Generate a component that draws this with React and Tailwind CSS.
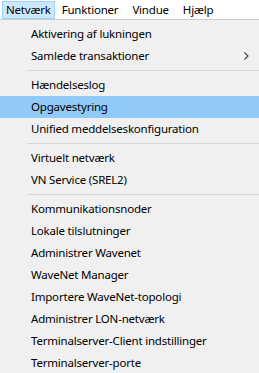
import React from 'react';

const groups = [
  [
    { label: 'Aktivering af lukningen' },
    { label: 'Samlede transaktioner', sub: true },
  ],
  [
    { label: 'Hændelseslog' },
    { label: 'Opgavestyring', active: true },
    { label: 'Unified meddelseskonfiguration' },
  ],
  [
    { label: 'Virtuelt netværk' },
    { label: 'VN Service (SREL2)' },
  ],
  [
    { label: 'Kommunikationsnoder' },
    { label: 'Lokale tilslutninger' },
    { label: 'Administrer Wavenet' },
    { label: 'WaveNet Manager' },
    { label: 'Importere WaveNet-topologi' },
    { label: 'Administrer LON-netværk' },
    { label: 'Terminalserver-Client indstillinger' },
    { label: 'Terminalserver-porte' },
  ],
];

const MenuItem = ({ item }) => (
  <div
    className={`h-[22px] flex items-center pl-[31px] pr-[9px] ${
      item.active ? 'bg-[#91c9f7]' : ''
    }`}
  >
    <span className="flex-1 whitespace-nowrap">{item.label}</span>
    {item.sub && (
      <svg width="5" height="8" viewBox="0 0 5 8" className="mr-[1px]">
        <path d="M0.5 0.5 L4 4 L0.5 7.5" fill="none" stroke="#404040" strokeWidth="1.1" />
      </svg>
    )}
  </div>
);

export default function App() {
  return (
    <div
      className="w-[259px] h-[373px] overflow-hidden bg-[#f0f0f0] text-[11.5px] tracking-[-0.2px] text-black"
      style={{ fontFamily: '"Segoe UI", "Noto Sans", sans-serif' }}
    >
      {/* Menu bar */}
      <div className="h-[20px] bg-white border-b border-[#cccccc] flex items-start pt-[1px]">
        <div className="ml-[2px] h-[18px] px-[3px] flex items-center bg-[#cce8ff] border border-[#99d1ff]">
          Netværk
        </div>
        <div className="h-[18px] px-[7px] flex items-center">Funktioner</div>
        <div className="h-[18px] px-[7px] flex items-center">Vindue</div>
        <div className="h-[18px] px-[7px] flex items-center">Hjælp</div>
      </div>

      {/* Dropdown */}
      <div className="pt-[3px]">
        {groups.map((group, gi) => (
          <div key={gi}>
            {gi > 0 && (
              <div className="h-[7px] flex items-center pl-[27px]">
                <div className="h-px w-full bg-[#d7d7d7]" />
              </div>
            )}
            {group.map((item) => (
              <MenuItem key={item.label} item={item} />
            ))}
          </div>
        ))}
      </div>
    </div>
  );
}
